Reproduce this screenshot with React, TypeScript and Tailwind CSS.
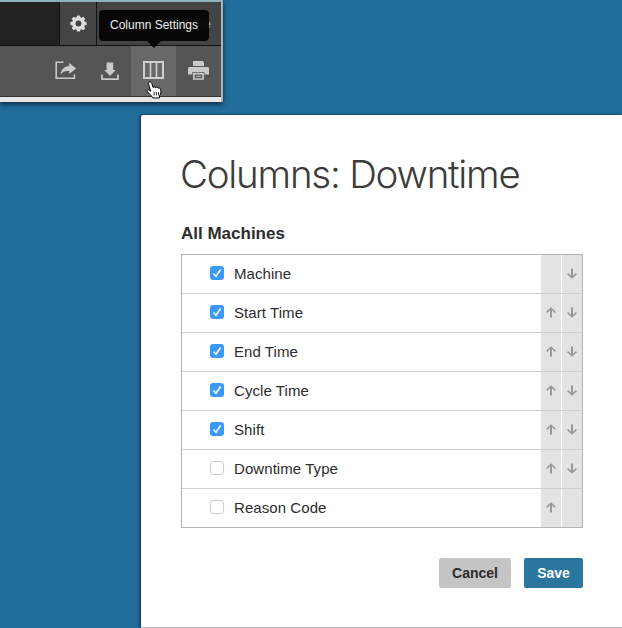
import React from "react";

type Column = { name: string; checked: boolean };

const columns: Column[] = [
  { name: "Machine", checked: true },
  { name: "Start Time", checked: true },
  { name: "End Time", checked: true },
  { name: "Cycle Time", checked: true },
  { name: "Shift", checked: true },
  { name: "Downtime Type", checked: false },
  { name: "Reason Code", checked: false },
];

function GearIcon() {
  const teeth = [0, 45, 90, 135, 180, 225, 270, 315];
  return (
    <svg width="17" height="17" viewBox="0 0 17 17">
      <circle cx="8.5" cy="8.5" r="4.7" fill="none" stroke="#dcdcdc" strokeWidth="3.5" />
      {teeth.map((a) => (
        <path key={a} d="M6.4 3.2 L7 0.4 H10 L10.6 3.2Z" fill="#dcdcdc" transform={`rotate(${a} 8.5 8.5)`} />
      ))}
    </svg>
  );
}

function ShareIcon() {
  return (
    <svg width="22" height="19" viewBox="0 0 22 19">
      <path d="M8.5 1.2H1.2V17.2H19.4V13.6" fill="none" stroke="#cacaca" strokeWidth="1.6" />
      <path d="M14.2 2 L21.2 7.5 L14.2 13 V10 C10.4 9.6 7.7 10.6 5.6 13.4 C6 8.6 9.4 5.4 14.2 5Z" fill="#cacaca" />
    </svg>
  );
}

function DownloadIcon() {
  return (
    <svg width="18" height="19" viewBox="0 0 18 19">
      <path d="M5.6 0.5H12.2V8H14.8L9 14L3.2 8H5.6Z" fill="#cacaca" />
      <path d="M1 12.5V17.2H17V12.5" fill="none" stroke="#cacaca" strokeWidth="1.7" />
    </svg>
  );
}

function ColumnsIcon() {
  return (
    <svg width="21" height="18" viewBox="0 0 21 18">
      <path d="M1 1H20V17H1Z" fill="none" stroke="#d0d0d0" strokeWidth="2" />
      <path d="M7.5 1V17M13.5 1V17" stroke="#d0d0d0" strokeWidth="1.6" />
    </svg>
  );
}

function PrintIcon() {
  return (
    <svg width="21" height="19" viewBox="0 0 21 19">
      <path d="M5 0H14.5L16 1.5V5H5Z" fill="#cacaca" />
      <path d="M1.5 6H19.5Q21 6 21 7.5V13.5H16.6V11H4.4V13.5H0V7.5Q0 6 1.5 6Z" fill="#cacaca" />
      <path d="M5.9 12.6H15.1V18H5.9Z" fill="none" stroke="#cacaca" strokeWidth="1.7" />
      <path d="M8 15.3H13" stroke="#cacaca" strokeWidth="1" />
    </svg>
  );
}

function HandCursor() {
  return (
    <svg width="16" height="18" viewBox="0 0 14.4 17" preserveAspectRatio="none">
      <path
        d="M3.3 1 C4.4 0.7 5 1.5 5.2 2.3 L6.4 6.2 C7 5.3 8.2 5.5 8.6 6.3 C9.3 5.6 10.5 5.9 10.9 6.8 C11.8 6.3 12.9 6.8 13.1 7.8 C13.6 10 13.6 12 12.2 13.8 L12.1 16 H6 C5.5 14.2 2.4 11.8 1 9.6 C0.7 8.4 2 8 3 8.7 L4.2 9.8 L2.3 2.8 C2 1.8 2.4 1.2 3.3 1Z"
        fill="#fff"
        stroke="#000"
        strokeWidth="0.9"
      />
      <path d="M7.3 10.5V13.6M9.3 10.5V13.6M11.2 10.5V13.6" stroke="#000" strokeWidth="0.8" />
    </svg>
  );
}

function MoveArrow({ down = false }: { down?: boolean }) {
  return (
    <svg width="10" height="11" viewBox="0 0 10 11" className={down ? "rotate-180" : ""}>
      <path d="M5 10.5V1.5" stroke="#989898" strokeWidth="2" />
      <path d="M0.6 5.4L5 1.2L9.4 5.4" fill="none" stroke="#989898" strokeWidth="1.5" />
    </svg>
  );
}

function Toolbar() {
  return (
    <div className="relative h-[102px] w-[223px] border-t-2 border-r-2 border-t-[#8fb0bf] border-r-[#aab4b8] bg-[#555] shadow-[0_2px_5px_rgba(0,0,0,0.65)]">
      <div className="flex h-[44px] border-b border-[#111] bg-[#444]">
        <div className="w-[60px] border-r border-[#111] bg-[#222]" />
        <div className="flex w-[37px] items-center justify-center border-r border-[#111] pb-px">
          <GearIcon />
        </div>
        <div className="flex flex-1 items-center justify-end pr-[10px] text-[13px] text-[#aaa]">Sight Machine</div>
      </div>
      <div className="flex h-[50px] items-center pl-[44px]">
        <div className="flex w-[43px] justify-center pb-px"><ShareIcon /></div>
        <div className="flex w-[44px] justify-center pl-[2px]"><DownloadIcon /></div>
        <div className="flex h-full w-[45px] items-center justify-center bg-[#686868] pb-[2px]"><ColumnsIcon /></div>
        <div className="flex w-[45px] justify-center pb-px"><PrintIcon /></div>
      </div>
      <div className="h-[6px] border-t border-[#333] bg-[#e6e6e4]" />
      <div className="absolute top-[8px] left-[99px] flex h-[31px] w-[110px] items-center justify-center rounded-[4px] bg-[#040404]/95 pb-[2px] text-[12px] whitespace-nowrap text-[#eee]">
        Column Settings
        <svg className="absolute top-[31px] left-[48px]" width="14" height="7"><path d="M0 0H14L7 7Z" fill="#070707" /></svg>
      </div>
      <div className="absolute top-[79px] left-[146px]"><HandCursor /></div>
    </div>
  );
}

function ColumnRow({ column, first, last }: { column: Column; first: boolean; last: boolean }) {
  return (
    <div className={`flex items-stretch ${last ? "h-[38px]" : "h-[39px] border-b border-[#cfcfcf]"}`}>
      <div className="flex flex-1 items-center pl-[28px]">
        <span className={`mb-[2px] flex h-[14px] w-[14px] items-center justify-center rounded-[3px] ${column.checked ? "bg-[#3b99fc]" : "border border-[#cdcdcd] bg-white"}`}>
          {column.checked && (
            <svg width="14" height="14" viewBox="0 0 14 14"><path d="M3.5 7.5L6 10.2L10.6 3.5" fill="none" stroke="#fff" strokeWidth="1.6" /></svg>
          )}
        </span>
        <span className="ml-[10px] text-[15px] tracking-[0.07px] text-[#2d2d2d]">{column.name}</span>
      </div>
      <div className="flex w-[21px] items-center justify-center border-r border-white bg-[#e3e3e3] pb-px">{!first && <MoveArrow />}</div>
      <div className="flex w-[20px] items-center justify-center bg-[#e3e3e3] pb-px">{!last && <MoveArrow down />}</div>
    </div>
  );
}

export default function App() {
  return (
    <div className="h-[628px] w-[622px] overflow-hidden bg-[#216d9b] font-['Liberation_Sans',Arial,sans-serif]">
      <Toolbar />
      <main className="mt-[13px] ml-[141px] h-[513px] rounded-tl-[2px] border-b border-[#b9bec6] bg-white pt-[35px] pl-[40px] shadow-[-1px_0_3px_rgba(0,0,0,0.6)]">
        <h1 className="-ml-px h-[48px] font-['Inter',sans-serif] text-[38.5px] leading-[48px] font-light tracking-[-1.24px] whitespace-nowrap text-[#3c3c3c]">Columns: Downtime</h1>
        <h2 className="mt-[24px] h-[24px] text-[17px] leading-[24px] font-bold text-[#2d2d2d]">All Machines</h2>
        <div className="mt-[8px] w-[402px] border border-[#b5b5b5]">
          {columns.map((c, i) => (
            <ColumnRow key={c.name} column={c} first={i === 0} last={i === columns.length - 1} />
          ))}
        </div>
        <div className="mt-[30px] flex w-[402px] justify-end gap-[13px] text-[14px] font-bold">
          <button className="h-[30px] w-[72px] rounded-[2px] bg-[#c5c5c5] text-[#2b2b2b]">Cancel</button>
          <button className="h-[30px] w-[59px] rounded-[2px] bg-[#2b769f] text-white">Save</button>
        </div>
      </main>
    </div>
  );
}
